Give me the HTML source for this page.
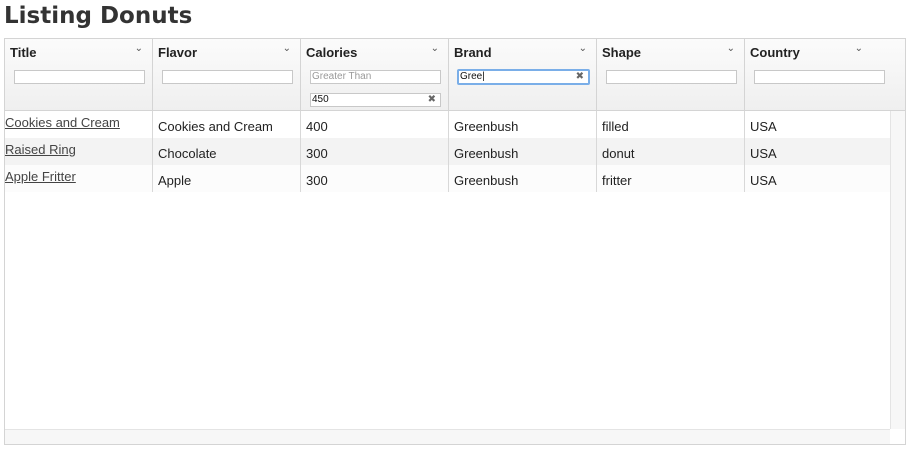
<!DOCTYPE html>
<html><head><meta charset="utf-8"><style>
*{box-sizing:border-box;margin:0;padding:0}
body{width:912px;height:455px;background:#fff;font-family:"Liberation Sans",sans-serif;color:#222;position:relative;overflow:hidden}
h1{position:absolute;left:4px;top:3px;font-size:23px;font-weight:bold;color:#333;font-family:"DejaVu Sans",sans-serif}
.grid{position:absolute;left:4px;top:38px;width:902px;height:407px;border:1px solid #d4d4d4}
.hdr{position:absolute;left:0;top:0;width:900px;height:72px;background:linear-gradient(#fbfbfb,#efefef);border-bottom:1px solid #d4d4d4}
.hc{position:absolute;top:0;height:71px;width:148px;border-right:1px solid #d4d4d4}
.hc b{position:absolute;left:5px;top:6px;font-size:13px;color:#222}
.hc .ar{position:absolute;right:9px;top:4px;font-size:10px;color:#555}
.in{position:absolute;left:9px;top:31px;width:131px;height:14px;background:#fff;border:1px solid #c8c8c8;font-size:10px;line-height:12px;padding-left:1px;color:#111}
.x{position:absolute;right:4px;top:0;font-size:10px;color:#666}
.row{position:absolute;left:0;width:885px;height:27px}
.c{position:absolute;top:0;height:27px;width:148px;border-right:1px solid #d8d8d8;font-size:13px;padding:8px 0 0 5px}
.c a{position:relative;top:-4px;left:-5px;color:#444;text-decoration:underline}
.vs{position:absolute;left:885px;top:72px;width:15px;height:318px;background:#f7f7f7;border-left:1px solid #e4e4e4}
.hs{position:absolute;left:0;top:390px;width:885px;height:15px;background:#f7f7f7;border-top:1px solid #e4e4e4}
</style></head><body>
<h1>Listing Donuts</h1>
<div class="grid">
<div class="hdr">
<div class="hc" style="left:0"><b>Title</b><span class="ar">⌄</span><div class="in"></div></div>
<div class="hc" style="left:148px"><b>Flavor</b><span class="ar">⌄</span><div class="in"></div></div>
<div class="hc" style="left:296px"><b>Calories</b><span class="ar">⌄</span><div class="in" style="color:#999">Greater Than</div><div class="in" style="top:54px">450<span class="x">✖</span></div></div>
<div class="hc" style="left:444px"><b>Brand</b><span class="ar">⌄</span><div class="in" style="left:8px;top:30px;width:133px;height:16px;border:2px solid #7aaee8;border-radius:2px">Gree|<span class="x">✖</span></div></div>
<div class="hc" style="left:592px"><b>Shape</b><span class="ar">⌄</span><div class="in"></div></div>
<div class="hc" style="left:740px;border-right:0"><b>Country</b><span class="ar" style="right:30px">⌄</span><div class="in"></div></div>
</div>
<div class="row" style="top:72px;background:#fff">
<div class="c" style="left:0"><a>Cookies and Cream</a></div><div class="c" style="left:148px">Cookies and Cream</div><div class="c" style="left:296px">400</div><div class="c" style="left:444px">Greenbush</div><div class="c" style="left:592px">filled</div><div class="c" style="left:740px;border:0">USA</div></div>
<div class="row" style="top:99px;background:#f3f3f3">
<div class="c" style="left:0"><a>Raised Ring</a></div><div class="c" style="left:148px">Chocolate</div><div class="c" style="left:296px">300</div><div class="c" style="left:444px">Greenbush</div><div class="c" style="left:592px">donut</div><div class="c" style="left:740px;border:0">USA</div></div>
<div class="row" style="top:126px;background:#fcfcfc">
<div class="c" style="left:0"><a>Apple Fritter</a></div><div class="c" style="left:148px">Apple</div><div class="c" style="left:296px">300</div><div class="c" style="left:444px">Greenbush</div><div class="c" style="left:592px">fritter</div><div class="c" style="left:740px;border:0">USA</div></div>
<div class="vs"></div><div class="hs"></div>
</div>
</body></html>
